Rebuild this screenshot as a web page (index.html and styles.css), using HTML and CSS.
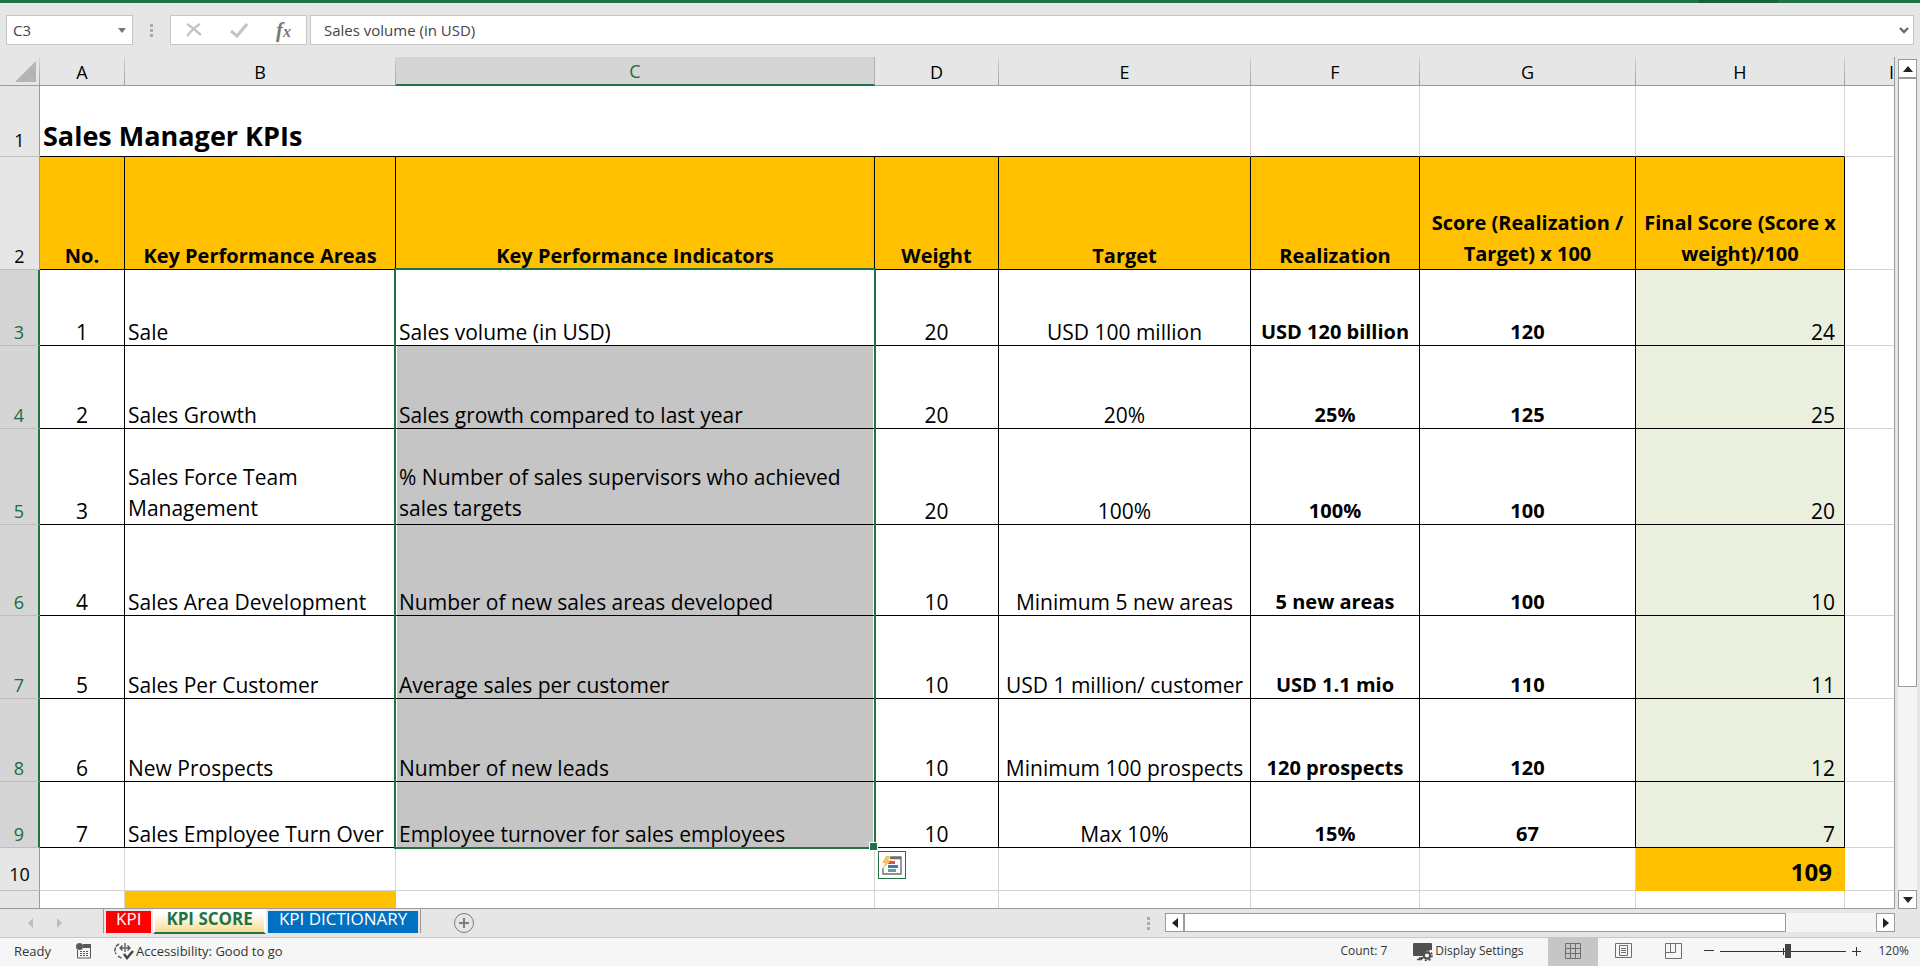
FILE: index.html
```html
<!DOCTYPE html>
<html lang="en">
<head>
<meta charset="utf-8">
<title>Sales Manager KPIs</title>
<link rel="stylesheet" href="styles.css">
</head>
<body>
<div class="ribbon-edge"><span class="ribbon-shade"></span></div>

<header class="formula-bar">
  <div class="name-box">
    <input type="text" value="C3" aria-label="Name box">
    <button type="button" aria-label="Show names"><svg width="8" height="5" viewBox="0 0 8 5"><path d="M0 0h8L4 5z" fill="#777"/></svg></button>
  </div>
  <svg class="grip" width="3" height="13" viewBox="0 0 3 13"><path d="M0 0h3v3H0zM0 5h3v3H0zM0 10h3v3H0z" fill="#ababab"/></svg>
  <div class="entry-tools">
    <button type="button" aria-label="Cancel"><svg width="16" height="14" viewBox="0 0 16 14"><path d="M1 1c5 3 9 7 14 11M14 1C9 4 5 8 1 13" stroke="#c4c4c4" stroke-width="2.4" fill="none"/></svg></button>
    <button type="button" aria-label="Enter"><svg width="18" height="15" viewBox="0 0 18 15"><path d="M1 8l6 5L17 1" stroke="#c4c4c4" stroke-width="3" fill="none"/></svg></button>
    <button type="button" class="fx" aria-label="Insert function"><span class="fx-f">f</span><span class="fx-x">x</span></button>
  </div>
  <div class="formula-box">
    <input type="text" value="Sales volume (in USD)" aria-label="Formula bar">
    <button type="button" aria-label="Expand formula bar"><svg width="10" height="7" viewBox="0 0 10 7"><path d="M1 1l4 4 4-4" stroke="#6a6a6a" stroke-width="2.4" fill="none"/></svg></button>
  </div>
</header>

<main class="workspace">
  <div class="grid">
    <table class="sheet">
      <colgroup>
        <col class="c-head"><col class="c-a"><col class="c-b"><col class="c-c"><col class="c-d"><col class="c-e"><col class="c-f"><col class="c-g"><col class="c-h"><col>
      </colgroup>
      <thead>
        <tr>
          <th class="corner"><svg width="21" height="21" viewBox="0 0 21 21"><path d="M21 0v21H0z" fill="#b4b4b4"/></svg></th>
          <th>A</th><th>B</th><th class="picked">C</th><th>D</th><th>E</th><th>F</th><th>G</th><th>H</th><th class="clip">I</th>
        </tr>
      </thead>
      <tbody>
        <tr class="r1"><th>1</th><td colspan="5" class="title">Sales Manager KPIs</td><td></td><td></td><td></td><td></td></tr>
        <tr class="r2 heads"><th>2</th><td>No.</td><td>Key Performance Areas</td><td>Key Performance Indicators</td><td>Weight</td><td>Target</td><td>Realization</td><td class="wrap">Score (Realization / Target) x 100</td><td class="wrap">Final Score (Score x weight)/100</td><td></td></tr>
        <tr class="r3 data"><th>3</th><td>1</td><td>Sale</td><td class="sel first">Sales volume (in USD)</td><td>20</td><td>USD 100 million</td><td>USD 120 billion</td><td>120</td><td>24</td><td></td></tr>
        <tr class="r4 data"><th>4</th><td>2</td><td>Sales Growth</td><td class="sel">Sales growth compared to last year</td><td>20</td><td>20%</td><td>25%</td><td>125</td><td>25</td><td></td></tr>
        <tr class="r5 data"><th>5</th><td>3</td><td class="wrap">Sales Force Team Management</td><td class="sel wrap">% Number of sales supervisors who achieved sales targets</td><td>20</td><td>100%</td><td>100%</td><td>100</td><td>20</td><td></td></tr>
        <tr class="r6 data"><th>6</th><td>4</td><td>Sales Area Development</td><td class="sel">Number of new sales areas developed</td><td>10</td><td>Minimum 5 new areas</td><td>5 new areas</td><td>100</td><td>10</td><td></td></tr>
        <tr class="r7 data"><th>7</th><td>5</td><td>Sales Per Customer</td><td class="sel">Average sales per customer</td><td>10</td><td>USD 1 million/ customer</td><td>USD 1.1 mio</td><td>110</td><td>11</td><td></td></tr>
        <tr class="r8 data"><th>8</th><td>6</td><td>New Prospects</td><td class="sel">Number of new leads</td><td>10</td><td>Minimum 100 prospects</td><td>120 prospects</td><td>120</td><td>12</td><td></td></tr>
        <tr class="r9 data"><th>9</th><td>7</td><td>Sales Employee Turn Over</td><td class="sel last">Employee turnover for sales employees
          <button type="button" class="quick" aria-label="Quick analysis"><svg width="20" height="20" viewBox="0 0 20 20"><path d="M8 2h11v17H1v-6M8 3.500h11" stroke="#6f6f6f" stroke-width="1.4" fill="none"/><path d="M7 6h6v3H6z" fill="#e0532f"/><path d="M6 10h10v3H6z" fill="#3f79b7"/><path d="M6 14h8v3H6z" fill="#5fa58d"/><path d="M4 1h5L6 5h3L1 14l2-6H0z" fill="#efc26e"/></svg></button>
        </td><td>10</td><td>Max 10%</td><td>15%</td><td>67</td><td>7</td><td></td></tr>
        <tr class="r10"><th>10</th><td></td><td></td><td></td><td></td><td></td><td></td><td></td><td class="total">109</td><td></td></tr>
        <tr class="r11"><th></th><td></td><td class="gold"></td><td></td><td></td><td></td><td></td><td></td><td></td><td></td></tr>
      </tbody>
    </table>
  </div>
  <div class="vscroll">
    <button type="button" aria-label="Scroll up"><svg width="10" height="6" viewBox="0 0 10 6"><path d="M0 6h10L5 0z" fill="#222"/></svg></button>
    <div class="track"><div class="thumb"></div></div>
    <button type="button" aria-label="Scroll down"><svg width="10" height="6" viewBox="0 0 10 6"><path d="M0 0h10L5 6z" fill="#222"/></svg></button>
  </div>
</main>

<nav class="tab-bar">
  <div class="tab-nav">
    <button type="button" aria-label="Previous sheet"><svg width="5" height="10" viewBox="0 0 5 10"><path d="M5 0v10L0 5z" fill="#bcbcbc"/></svg></button>
    <button type="button" aria-label="Next sheet"><svg width="5" height="10" viewBox="0 0 5 10"><path d="M0 0v10l5-5z" fill="#bcbcbc"/></svg></button>
  </div>
  <div class="tabs">
    <button type="button" class="tab red">KPI</button>
    <button type="button" class="tab active">KPI SCORE</button>
    <button type="button" class="tab blue">KPI DICTIONARY</button>
  </div>
  <button type="button" class="add" aria-label="New sheet"><svg width="22" height="22" viewBox="0 0 22 22"><circle cx="11" cy="11" r="9.5" stroke="#7d7d7d" fill="none"/><path d="M11 6v10M6 11h10" stroke="#7d7d7d" stroke-width="2"/></svg></button>
  <svg class="grip tab-grip" width="3" height="13" viewBox="0 0 3 13"><path d="M0 0h3v3H0zM0 5h3v3H0zM0 10h3v3H0z" fill="#ababab"/></svg>
  <div class="hscroll">
    <button type="button" aria-label="Scroll left"><svg width="6" height="10" viewBox="0 0 6 10"><path d="M6 0v10L0 5z" fill="#222"/></svg></button>
    <div class="track"><div class="thumb"></div></div>
    <button type="button" aria-label="Scroll right"><svg width="6" height="10" viewBox="0 0 6 10"><path d="M0 0v10l6-5z" fill="#222"/></svg></button>
  </div>
</nav>

<footer class="status-bar">
  <span class="ready">Ready</span>
  <button type="button" class="macro" aria-label="Record macro"><svg width="16" height="16" viewBox="0 0 16 16"><path d="M1.500 7v8h13V4" stroke="#5a5a5a" fill="none"/><path d="M7 1h8v4H7z" fill="#5a5a5a"/><circle cx="3.500" cy="3.500" r="3.500" fill="#5a5a5a"/><path d="M4 8.500h9M4 10.500h9M4 12.500h9" stroke="#5a5a5a" stroke-dasharray="2 1"/></svg></button>
  <button type="button" class="access"><svg width="20" height="18" viewBox="0 0 20 18"><path d="M5 2a7 7 0 0 0-3 10M4 14a7 7 0 0 0 4 2" stroke="#555" stroke-width="1.500" fill="none" stroke-dasharray="4 1"/><path d="M6 6h10M8.500 3.500L6 6l2.500 2.500M13.500 3.500L16 6l-2.500 2.500M11 1v4M11 7v3" stroke="#555" stroke-width="1.300" fill="none"/><path d="M10 12l3 4 6-7" stroke="#444" stroke-width="2.400" fill="none"/></svg>Accessibility: Good to go</button>
  <span class="count">Count: 7</span>
  <button type="button" class="display"><svg width="20" height="19" viewBox="0 0 20 19"><path d="M1 1h17a1 1 0 0 1 1 1v6h-4l-4 3-1 3H1a1 1 0 0 1-1-1V2a1 1 0 0 1 1-1z" fill="#505050"/><path d="M4 17.500h5M6 16h4" stroke="#505050" stroke-width="1.500"/><circle cx="14" cy="13.500" r="3.200" stroke="#505050" stroke-width="2.200" fill="#f6f6f6"/><circle cx="14" cy="13.500" r="5" stroke="#505050" stroke-width="1.600" fill="none" stroke-dasharray="2 1.930"/></svg>Display Settings</button>
  <div class="views">
    <button type="button" class="on" aria-label="Normal view"><svg width="16" height="16" viewBox="0 0 16 16"><path d="M.5.5h15v15H.5zM5.500.5v15M10.500.5v15M.5 5.500h15M.5 10.500h15" stroke="#6e6e6e" fill="none"/></svg></button>
    <button type="button" aria-label="Page layout"><svg width="17" height="16" viewBox="0 0 17 16"><path d="M.5.5h16v14H.5zM4.500 2.500h8v10h-8zM6 5.500h5M6 7.500h5M6 9.500h5" stroke="#6e6e6e" fill="none"/></svg></button>
    <button type="button" aria-label="Page break preview"><svg width="17" height="16" viewBox="0 0 17 16"><path d="M.5.5h16v15H.5zM5.500.5v9M.5 9.500h10v-9" stroke="#6e6e6e" fill="none"/></svg></button>
  </div>
  <div class="zoom">
    <button type="button" aria-label="Zoom out"><svg width="10" height="10" viewBox="0 0 10 10"><path d="M0 4.500h10" stroke="#333"/></svg></button>
    <input type="range" min="0" max="100" value="54" aria-label="Zoom">
    <button type="button" aria-label="Zoom in"><svg width="9" height="9" viewBox="0 0 9 9"><path d="M0 4.500h9M4.500 0v9" stroke="#333"/></svg></button>
  </div>
  <span class="percent">120%</span>
</footer>
</body>
</html>
```
FILE: styles.css
```css
* { box-sizing: border-box; }
body {
  margin: 0;
  height: 100vh;
  display: flex;
  flex-direction: column;
  overflow: hidden;
  background: #e6e6e6;
  color: #000;
  font-family: "Open Sans", sans-serif;
  font-size: 21px;
}
button, input {
  font: inherit;
  color: inherit;
  background: none;
  border: 0;
  padding: 0;
  margin: 0;
  border-radius: 0;
}
button { display: flex; align-items: center; justify-content: center; }
svg { display: block; flex: none; }

.ribbon-edge { height: 3px; background: #217346; display: flex; justify-content: flex-end; flex: none; }
.ribbon-shade { width: 80px; margin-right: 142px; background: #1e5f3b; border-radius: 0 0 6px 6px; }

/* formula bar */
.formula-bar {
  display: flex;
  align-items: center;
  flex: none;
  padding: 12px 6px 12px 6px;
  font-size: 15px;
  color: #444;
}
.name-box, .entry-tools, .formula-box {
  display: flex;
  align-items: stretch;
  height: 30px;
  background: #fff;
  border: 1px solid #c6c6c6;
}
.name-box { width: 127px; padding: 0 6px; }
.name-box input { flex: 1; min-width: 0; }
.formula-bar .grip { margin: 0 17px; }
.entry-tools { width: 137px; margin-right: 3px; }
.entry-tools button { flex: 1; }
.fx { font-family: "Liberation Serif", serif; font-style: italic; font-weight: bold; color: #777; }
.fx-f { font-size: 21px; line-height: 28px; }
.fx-x { font-size: 16px; align-self: flex-end; line-height: 24px; }
.formula-box { flex: 1; padding: 0 4px 0 13px; }
.formula-box input { flex: 1; min-width: 0; }

/* worksheet */
.workspace { flex: 1; min-height: 0; display: flex; }
.grid {
  flex: 1;
  min-width: 0;
  overflow: hidden;
  background: #fff;
  border-right: 1px solid #9b9b9b;
  border-bottom: 1px solid #9b9b9b;
}
.sheet { width: 100%; table-layout: fixed; border-collapse: separate; border-spacing: 0; }
.c-head { width: 40px; }
.c-a { width: 85px; }
.c-b { width: 271px; }
.c-c { width: 479px; }
.c-d { width: 124px; }
.c-e { width: 252px; }
.c-f { width: 169px; }
.c-g { width: 216px; }
.c-h { width: 209px; }

th { padding: 0; font-weight: normal; font-size: 18px; background: #e6e6e6; line-height: 26px; }
thead th {
  height: 29px;
  padding-top: 2px;
  border-bottom: 1px solid #9b9b9b;
  border-right: 1px solid;
  border-image: linear-gradient(#d8d8d8, #9b9b9b) 1;
}
thead .corner { padding-top: 0; }
thead .corner svg { margin: 0 0 0 15px; }
thead .picked { background: #d5d5d5; color: #1e6a40; border-bottom: 2px solid #217346; border-right: 1px solid #b0b0b0; border-image: none; line-height: 25px; }
thead .clip { text-align: right; border-right: 0; }
tbody th {
  vertical-align: bottom;
  border-right: 1px solid #9b9b9b;
  border-bottom: 1px solid #bdbdbd;
}
td {
  padding: 0 3px;
  vertical-align: bottom;
  line-height: 26px;
  white-space: nowrap;
  border-right: 1px solid #d4d4d4;
  border-bottom: 1px solid #d4d4d4;
}
td:last-child { border-right: 0; }
.wrap { white-space: normal; line-height: 31px; }

.r1 { height: 71px; }
.r2 { height: 113px; }
.r3 { height: 76px; }
.r4, .r7, .r8 { height: 83px; }
.r5 { height: 96px; }
.r6 { height: 91px; }
.r9 { height: 66px; }
.r10 { height: 43px; }
.r11 { height: 43px; }

.r1 th, .r10 th { line-height: 32px; }
.r1 td:not(:last-child) { border-bottom-color: #000; }
.title { font-size: 27px; font-weight: bold; line-height: 40px; }

.heads td, .data td { border-color: #000; text-align: center; }
.heads td:last-child, .data td:last-child { border-color: #d4d4d4; }
.heads td:not(:last-child) { background: #ffc000; font-size: 20px; font-weight: bold; }
.data th { background: #d5d5d5; color: #1e6a40; border-right: 2px solid #217346; }
.data td:nth-child(3), .data td:nth-child(4) { text-align: left; }
.data td:nth-child(7), .data td:nth-child(8) { font-size: 20px; font-weight: bold; }
.data td:nth-child(9) { text-align: right; padding-right: 9px; background: #ebf0de; }
.total { background: #ffc000; border-color: #ffc000; font-size: 24px; font-weight: bold; line-height: 36px; text-align: right; padding-right: 12px; }
.gold { background: #ffc000; border-color: #ffc000; }

/* selected range */
.sel { position: relative; background: #c5c5c5; box-shadow: inset 1px 0 #fff, inset -1px 0 #fff; }
.sel.first { background: #fff; }
.sel::after {
  content: "";
  position: absolute;
  inset: 0 -2px -1px -2px;
  border: 0 solid #217346;
  border-width: 0 2px;
  pointer-events: none;
}
.sel.first::after { top: -2px; border-top-width: 2px; }
.sel.last::after { bottom: -2px; border-bottom-width: 2px; }
.sel.last::before {
  content: "";
  position: absolute;
  right: -4px;
  bottom: -4px;
  z-index: 1;
  width: 7px;
  height: 7px;
  background: #217346;
  border: 1px solid #fff;
}
.quick {
  position: absolute;
  top: 100%;
  left: 100%;
  z-index: 2;
  margin: 4px 0 0 4px;
  width: 28px;
  height: 28px;
  background: #fff;
  border: 1px solid #217346;
}

/* scroll bars */
.vscroll { width: 25px; display: flex; flex-direction: column; padding: 2px 3px 0 3px; flex: none; }
.vscroll button, .hscroll button, .thumb { background: #fff; border: 1px solid #9b9b9b; }
.vscroll button { height: 19px; flex: none; }
.track { flex: 1; background: #f5f5f5; }
.vscroll .thumb { height: 75%; }

/* sheet tabs */
.tab-bar { display: flex; flex: none; height: 28px; padding-right: 25px; font-size: 17px; }
.tab-nav { width: 103px; display: flex; gap: 24px; padding-left: 28px; }
.tabs { display: flex; align-items: flex-start; gap: 2px; height: 24px; padding: 0 2px; border: 0 solid #9b9b9b; border-width: 0 1px; }
.tab { height: 22px; margin-top: 2px; color: #fff; line-height: 16px; padding: 0 11px 6px; }
.red { background: #f00; padding: 0 10px 6px; }
.blue { background: #0070c0; }
.active {
  height: 25px;
  margin-top: 0;
  padding-bottom: 4px;
  color: #217346;
  font-weight: bold;
  background: linear-gradient(#fff 20%, #fbdc8f);
  border: 2px solid #fff;
  border-bottom: 2px solid #217346;
  border-top: 0;
}
.add { margin: 3px auto 3px 32px; }
.tab-grip { margin: 8px 15px 0 0; }
.hscroll { display: flex; width: calc(40% - 28px); margin: 4px 0 5px; }
.hscroll button { width: 19px; flex: none; }
.hscroll .thumb { width: 87%; height: 100%; }

/* status bar */
.status-bar {
  display: flex;
  align-items: stretch;
  flex: none;
  height: 29px;
  padding-bottom: 2px;
  border-top: 1px solid #c6c6c6;
  background: #f6f6f6;
  color: #333;
  font-size: 12px;
  line-height: 26px;
  white-space: nowrap;
}
.ready, .access { font-size: 13px; }
.ready { width: 62px; padding-left: 14px; margin-right: 14px; }
.access { gap: 2px; margin-left: 22px; }
.count { margin-left: auto; }
.display { margin: 0 25px 0 26px; gap: 2px; }
.views { display: flex; margin-bottom: -2px; }
.views button { width: 50px; padding-bottom: 2px; }
.views .on { background: #c6c6c6; }
.zoom { display: flex; align-items: center; gap: 6px; margin-left: 6px; }
.zoom input { appearance: none; width: 126px; height: 14px; background: linear-gradient(#333, #333) center / 100% 1px no-repeat, linear-gradient(#333, #333) 50% 50% / 1px 7px no-repeat; }
.zoom input::-webkit-slider-thumb { appearance: none; width: 6px; height: 14px; background: #444; }
.percent { margin-right: 11px; padding-left: 17px; }
```
